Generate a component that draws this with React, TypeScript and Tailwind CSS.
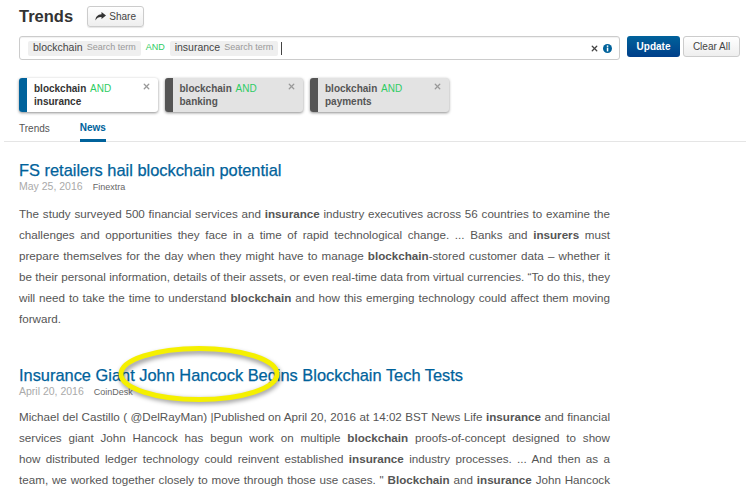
import React from 'react'
import { X } from 'lucide-react'

function Term({ label }: { label: string }) {
  return (
    <span className="flex h-[15px] items-center gap-[4px] rounded-[2px] bg-[#efefef] px-[5px]">
      <span className="text-[10.5px] text-[#444]">{label}</span>
      <span className="text-[9px] text-[#999]">Search term</span>
    </span>
  )
}

function QueryCard({ second, active }: { second: string; active?: boolean }) {
  return (
    <div className={`flex h-[34px] w-[138.5px] overflow-hidden rounded-[3px] shadow-[0_1px_3px_rgba(0,0,0,0.45)] ${active ? 'bg-white' : 'bg-[#e3e3e3]'}`}>
      <div className={`w-[8px] shrink-0 ${active ? 'bg-[#00629b]' : 'bg-[#555]'}`} />
      <div className={`flex-1 pl-[7px] pt-[4px] text-[10px] leading-[13px] font-bold ${active ? 'text-[#333]' : 'text-[#555]'}`}>
        <div>
          blockchain <span className="ml-[1px] font-normal text-[#2ecc63]">AND</span>
        </div>
        <div>{second}</div>
      </div>
      <X size={9} strokeWidth={3.5} className="mr-[7px] mt-[4px] text-[#999]" />
    </div>
  )
}

function Article({ title, date, source, bodyClass, children }: { title: string; date: string; source: string; bodyClass: string; children: React.ReactNode }) {
  return (
    <article className="px-[19px]">
      <h2 className="text-[16.4px] leading-[20px] font-normal text-[#00629b] [-webkit-text-stroke:0.25px_#00629b]">{title}</h2>
      <div className="flex items-baseline gap-[10px] leading-[12px]">
        <span className="text-[10.5px] text-[#aaa]">{date}</span>
        <span className="text-[9px] text-[#666]">{source}</span>
      </div>
      <p className={`w-[591px] text-justify text-[11.65px] leading-[21px] text-[#555] ${bodyClass}`}>{children}</p>
    </article>
  )
}

export default function App() {
  return (
    <div className="relative h-[488px] w-[746px] overflow-hidden bg-white font-['Liberation_Sans',Arial,sans-serif]">
      <header className="flex items-center gap-[14px] px-[19px] pt-[6px]">
        <h1 className="text-[16.5px] leading-[21px] font-bold text-[#333]">Trends</h1>
        <button className="flex h-[21px] w-[57px] items-center justify-center gap-[3px] rounded-[3px] border border-[#ccc] bg-gradient-to-b from-white to-[#eee] text-[10px] text-[#444] shadow-[0_1px_1px_rgba(0,0,0,0.1)]">
          <svg width="11" height="9" viewBox="0 0 11 9" fill="#333">
            <path d="M6.5 0 11 3.6 6.5 7V4.9C3.6 4.8 1.6 5.8.5 8.6.4 5 2.6 2.5 6.5 2.3Z" />
          </svg>
          Share
        </button>
      </header>

      <div className="mt-[9px] flex items-start px-[19px]">
        <div className="flex h-[24px] w-[601px] shrink-0 items-center rounded-[3px] border border-[#ccc] pl-[8px] pr-[7px] shadow-[inset_0_1px_1px_rgba(0,0,0,0.06)]">
          <Term label="blockchain" />
          <span className="mx-[5px] text-[9px] text-[#2ecc63]">AND</span>
          <Term label="insurance" />
          <span className="ml-[3px] h-[13px] w-px bg-[#444]" />
          <X size={9} strokeWidth={3.5} className="ml-auto text-[#444]" />
          <svg width="9" height="9" viewBox="0 0 9 9" className="ml-[4px]">
            <circle cx="4.5" cy="4.5" r="4.5" fill="#00629b" />
            <rect x="3.8" y="1.4" width="1.5" height="1.5" fill="white" />
            <rect x="3.8" y="3.6" width="1.5" height="3.8" fill="white" />
          </svg>
        </div>
        <button className="ml-[7px] h-[21px] w-[53px] shrink-0 rounded-[3px] bg-gradient-to-b from-[#00629b] to-[#003f8a] text-[10px] font-bold text-white">Update</button>
        <button className="ml-[3px] h-[21px] w-[57px] shrink-0 rounded-[3px] border border-[#ccc] bg-gradient-to-b from-white to-[#eee] text-[10px] text-[#444]">Clear All</button>
      </div>

      <div className="mt-[18px] flex gap-[7px] px-[19px]">
        <QueryCard second="insurance" active />
        <QueryCard second="banking" />
        <QueryCard second="payments" />
      </div>

      <nav className="ml-[4px] mt-[6px] flex h-[24px] gap-[30px] border-b border-[#e5e5e5] pl-[15px] text-[10px]">
        <span className="pt-[3px] text-[#555]">Trends</span>
        <span className="h-[24px] border-b-[3px] border-[#00629b] pt-[2px] font-bold text-[#00629b]">News</span>
      </nav>

      <div className="mt-[18px] flex flex-col gap-[36px]">
        <Article title="FS retailers hail blockchain potential" date="May 25, 2016" source="Finextra" bodyClass="mt-[10px]">
          The study surveyed 500 financial services and <b>insurance</b> industry executives across 56 countries to examine the challenges and opportunities they face in a time of rapid technological change. ... Banks and <b>insurers</b> must prepare themselves for the day when they might have to manage <b>blockchain</b>-stored customer data – whether it be their personal information, details of their assets, or even real-time data from virtual currencies. “To do this, they will need to take the time to understand <b>blockchain</b> and how this emerging technology could affect them moving forward.
        </Article>
        <Article title="Insurance Giant John Hancock Begins Blockchain Tech Tests" date="April 20, 2016" source="CoinDesk" bodyClass="mt-[8px] [text-align-last:justify]">
          Michael del Castillo ( @DelRayMan) |Published on April 20, 2016 at 14:02 BST News Life <b>insurance</b> and financial services giant John Hancock has begun work on multiple <b>blockchain</b> proofs-of-concept designed to show how&nbsp;distributed ledger technology could reinvent established <b>insurance</b> industry processes. ... And then as a team,&nbsp;we worked together closely to move through those use cases. " <b>Blockchain</b> and <b>insurance</b> John Hancock
        </Article>
      </div>

      <svg className="absolute left-[112px] top-[338px]" width="176" height="72" viewBox="0 0 176 72" fill="none">
        <ellipse cx="88" cy="38.5" rx="78" ry="25" stroke="rgba(0,0,0,0.35)" strokeWidth="6" style={{ filter: 'blur(2px)' }} />
        <ellipse cx="87" cy="36" rx="78" ry="25.5" stroke="#f5f000" strokeWidth="5" />
      </svg>
    </div>
  )
}
